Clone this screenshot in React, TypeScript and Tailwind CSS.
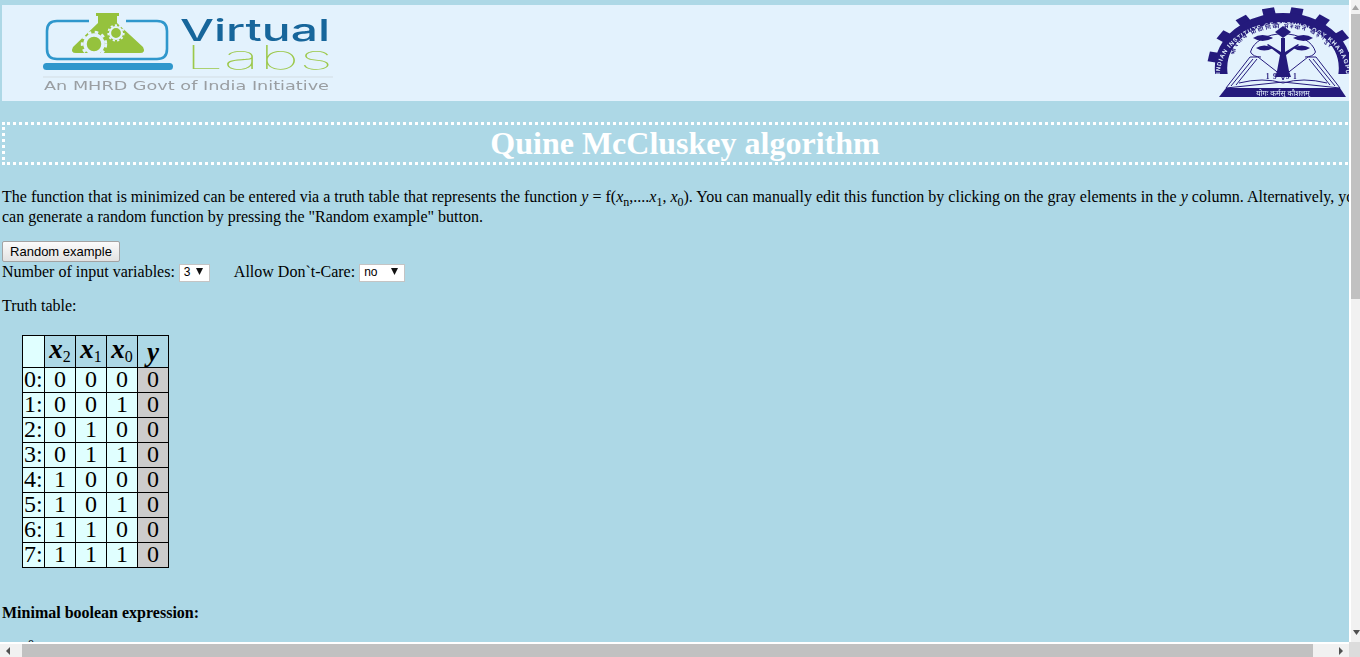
const sans = "font-['Liberation_Sans',Arial,sans-serif]";
const Row = ({ i, b }: { i: number; b: string }) => (
  <tr>
    <td className="border border-black bg-[#e0ffff] px-[1px] pb-[2px] h-[25px] leading-[22px]">{i}:</td>
    {b.split("").map((c, k) => (
      <td key={k} className="border border-black bg-[#e0ffff] text-center pb-[2px] h-[25px] leading-[22px]">{c}</td>
    ))}
    <td className="border border-black bg-[#cccccc] text-center pb-[2px] h-[25px] leading-[22px]">0</td>
  </tr>
);
const Hd = ({ n }: { n: number }) => (
  <th className="border border-black w-[31px] h-[31px] pb-[4px] text-[27px] leading-none font-bold italic whitespace-nowrap">
    x<sub className="text-[16px] not-italic font-normal leading-none bottom-[-4px]">{n}</sub>
  </th>
);
const Sub = ({ c }: { c: string }) => <sub className="text-[12px] leading-[0] bottom-[-4px]">{c}</sub>;
const Sel = ({ v, w }: { v: string; w: string }) => (
  <span className={`inline-flex items-center justify-between align-[1px] h-[18px] bg-white border border-[#c4c4c4] pl-[4px] pr-[6px] text-[12px] text-black ${w} ${sans}`}>
    {v}
    <svg width="7" height="7" viewBox="0 0 7 7" className="mb-[2px]"><path d="M0 0h7L3.5 7z" fill="#111" /></svg>
  </span>
);
const Gear = ({ cx, cy, r, t }: { cx: number; cy: number; r: number; t: number }) => (
  <g fill="none" stroke="#e4f2fd">
    <circle cx={cx} cy={cy} r={r} strokeWidth={t} />
    <circle cx={cx} cy={cy} r={r + t * 0.8} strokeWidth={t * 0.8} strokeDasharray={`${t} ${t}`} />
  </g>
);
const Vlabs = () => (
  <svg width="300" height="90" viewBox="0 0 300 90" className="block blur-[0.4px]">
    <path d="M49 11H17q-10 0-10 10V39q0 10 10 10H117q10 0 10-10V21q0-10-10-10H86" fill="none" stroke="#2f97cc" strokeWidth="2.6" />
    <rect x="3" y="53" width="130" height="7" rx="3.5" fill="#2f97cc" />
    <path d="M56 3H79V6H77V13L103 37Q106 43 100 43H36Q30 43 33 37L58 13V6H56Z" fill="#95c23d" />
    <Gear cx={54} cy={34} r={9} t={3.5} />
    <Gear cx={76} cy={23} r={6} t={2.2} />
    <text x="140" y="31" fontFamily="Inter,'Liberation Sans',sans-serif" fontSize="30" fontWeight="500" fill="#17669b" textLength="150" lengthAdjust="spacingAndGlyphs">Virtual</text>
    <text x="145" y="59" fontFamily="Inter,'Liberation Sans',sans-serif" fontSize="33" fontWeight="100" fill="#9cc84a" textLength="148" lengthAdjust="spacingAndGlyphs">Labs</text>
    <line x1="3" y1="67" x2="293" y2="67" stroke="#d3dde3" />
    <text x="4" y="80" fontFamily="'DejaVu Sans',sans-serif" fontSize="11.5" fill="#9a9ea2" textLength="285" lengthAdjust="spacingAndGlyphs">An MHRD Govt of India Initiative</text>
  </svg>
);
const navy = "#241a7c";
const light = "#e3f2fd";
const Kgp = () => {
  const teeth = Array.from({ length: 16 }, (_, i) => (i * 360) / 16 + 11);
  return (
    <svg width="155" height="96" viewBox="0 0 155 96" className="block shrink-0 blur-[0.35px]">
      <defs>
        <clipPath id="gearClip"><path d="M0 0H155V69H125L112 50H48L35 69H0Z" /></clipPath>
      </defs>
      <g clipPath="url(#gearClip)">
        <g transform="translate(80 63) scale(1.24 1)" fill={navy}>
          {teeth.map((a, i) => (
            <rect key={i} x="-5" y="-61" width="10" height="8" transform={`rotate(${a})`} />
          ))}
          <circle r="50" fill="none" stroke={navy} strokeWidth="10" />
        </g>
      </g>
      <path id="engArc" d="M17 69A63 48 0 1 1 143 69" fill="none" />
      <text fontFamily="'Liberation Sans',sans-serif" fontSize="6" fontWeight="700" fill={light}>
        <textPath href="#engArc" textLength="180" lengthAdjust="spacing">INDIAN INSTITUTE OF TECHNOLOGY KHARAGPUR</textPath>
      </text>
      <path id="hinArc" d="M32 50A48 27 0 0 1 128 50" fill="none" />
      <text fontFamily="'Noto Sans','Noto Sans Devanagari',sans-serif" fontSize="6" fontWeight="700" fill={navy}>
        <textPath href="#hinArc" textLength="112" lengthAdjust="spacing">भारतीय प्रौद्योगिकी संस्थान खड़गपुर</textPath>
      </text>
      <path d="M47.5 47A33 22 0 0 1 112.5 47M47.5 47Q50 52 58 52M112.5 47Q110 52 102 52" fill="none" stroke={navy} strokeWidth="1" />
      <g fill={navy}>
        <path d="M80 21l8 6-8 6-8-6z" />
        <path d="M50 33q9-6 20 0-11 6-20 0z" />
        <path d="M90 33q11-6 20 0-9 6-20 0z" />
        <path d="M53 43q8-5 17 0-9 5-17 0z" />
        <path d="M90 43q9-5 17 0-8 5-17 0z" />
        <path d="M74 66 77 50 64 40l1-1 13 8V33h4v14l13-8 1 1-13 10 3 16z" />
      </g>
      <g fill={light} stroke={navy} strokeWidth="1">
        <path d="M23 83 47 52H55L78 70 80 75 82 70 105 52H113L137 83 80 77Z" />
      </g>
      <path d="M28 81 50 54M33 80 54 54M132 81 110 54M127 80 106 54M36 78Q60 72 80 78Q100 72 124 78" fill="none" stroke={navy} strokeWidth="1" />
      <path d="M74 66H86L88 72H72Z" fill={navy} />
      <text x="80" y="74" textAnchor="middle" fontFamily="'Liberation Serif',serif" fontSize="7.5" fontWeight="700" fill={navy} letterSpacing="3.5">19 51</text>
      <path d="M23 83H137L143 92H16Z" fill={navy} />
      <text x="80" y="90.5" textAnchor="middle" fontFamily="'Noto Sans',sans-serif" fontSize="7.5" fill={light}>योगः कर्मसु कौशलम्</text>
    </svg>
  );
};
export default function App() {
  return (
    <div className="relative h-[657px] w-[1360px] overflow-hidden bg-[#add8e6] text-black font-['Liberation_Serif','Times_New_Roman',serif] text-[16px]">
      <div className="w-[1375px] pt-[5px] pl-[2px]">
        <div className="flex h-[96px] justify-between overflow-hidden bg-[#e3f2fd] pr-[17px]">
          <div className="pl-[38px] pt-[5px]"><Vlabs /></div>
          <Kgp />
        </div>
        <h1 className="mt-[21px] mr-[10px] h-[43px] border-[3px] border-dotted border-white border-r-0 text-center text-[32px] font-bold leading-[37px] text-white">
          Quine McCluskey algorithm
        </h1>
        <p className="mt-[22px] leading-[20px]">
          The function that is minimized can be entered via a truth table that represents the function <i>y</i> = f(<i>x</i><Sub c="n" />,....<i>x</i><Sub c="1" />, <i>x</i><Sub c="0" />). You can manually edit this function by clicking on the gray elements in the <i>y</i> column. Alternatively, you can generate a random function by pressing the "Random example" button.
        </p>
        <button className={`mt-[14px] block h-[21px] w-[118px] rounded-[2px] border border-[#a3a3a3] bg-gradient-to-b from-[#fbfbfb] to-[#e2e2e2] text-[13px] leading-none text-black ${sans}`}>
          Random example
        </button>
        <div className="h-[19px] leading-[19px] whitespace-nowrap">
          Number of input variables: <Sel v="3" w="w-[31px]" /><span className="ml-[24px]">Allow Don`t-Care:</span> <Sel v="no" w="w-[46px]" />
        </div>
        <p className="mt-[15px] leading-[20px]">Truth table:</p>
        <table className="ml-[20px] mt-[19px] border-collapse text-[24px] leading-none">
          <thead>
            <tr>
              <th className="border border-black bg-[#e0ffff] w-[22px] h-[31px]"></th>
              <Hd n={2} /><Hd n={1} /><Hd n={0} />
              <th className="border border-black w-[31px] pt-[1px] text-[27px] leading-none font-bold italic">y</th>
            </tr>
          </thead>
          <tbody>
            {["000", "001", "010", "011", "100", "101", "110", "111"].map((b, i) => <Row key={i} i={i} b={b} />)}
          </tbody>
        </table>
        <p className="mt-[35px] font-bold leading-[20px]">Minimal boolean expression:</p>
        <div className="mt-[14px] pl-[26px] text-[12px] leading-[14px]">0</div>
      </div>
      {/* vertical scrollbar */}
      <div className="absolute right-0 top-0 bottom-0 w-[11px] border-l-[2px] border-white bg-[#f1f1f1] flex flex-col">
        <div className="flex h-[14px] items-center justify-center"><svg width="7" height="5" viewBox="0 0 7 5"><path d="M3.5 0L7 5H0z" fill="#a3a3a3" /></svg></div>
        <div className="h-[285px] bg-[#c1c1c1]" />
      </div>
      <div className="absolute right-0 bottom-[18px] flex h-[14px] w-[7px] items-center justify-center"><svg width="7" height="5" viewBox="0 0 7 5"><path d="M0 0h7L3.5 5z" fill="#505050" /></svg></div>
      {/* horizontal scrollbar */}
      <div className="absolute left-0 bottom-0 flex h-[15px] w-[1349px] items-stretch border-t-[2px] border-white bg-[#f1f1f1]">
        <div className="flex w-[22px] items-center pl-[6px]"><svg width="4" height="8" viewBox="0 0 4 8"><path d="M4 0v8L0 4z" fill="#505050" /></svg></div>
        <div className="w-[1291px] bg-[#c1c1c1]" />
        <div className="flex flex-1 items-center justify-end pr-[6px]"><svg width="4" height="8" viewBox="0 0 4 8"><path d="M0 0v8l4-4z" fill="#505050" /></svg></div>
      </div>
      <div className="absolute right-0 bottom-0 h-[15px] w-[11px] bg-[#dcdcdc]" />
    </div>
  );
}
